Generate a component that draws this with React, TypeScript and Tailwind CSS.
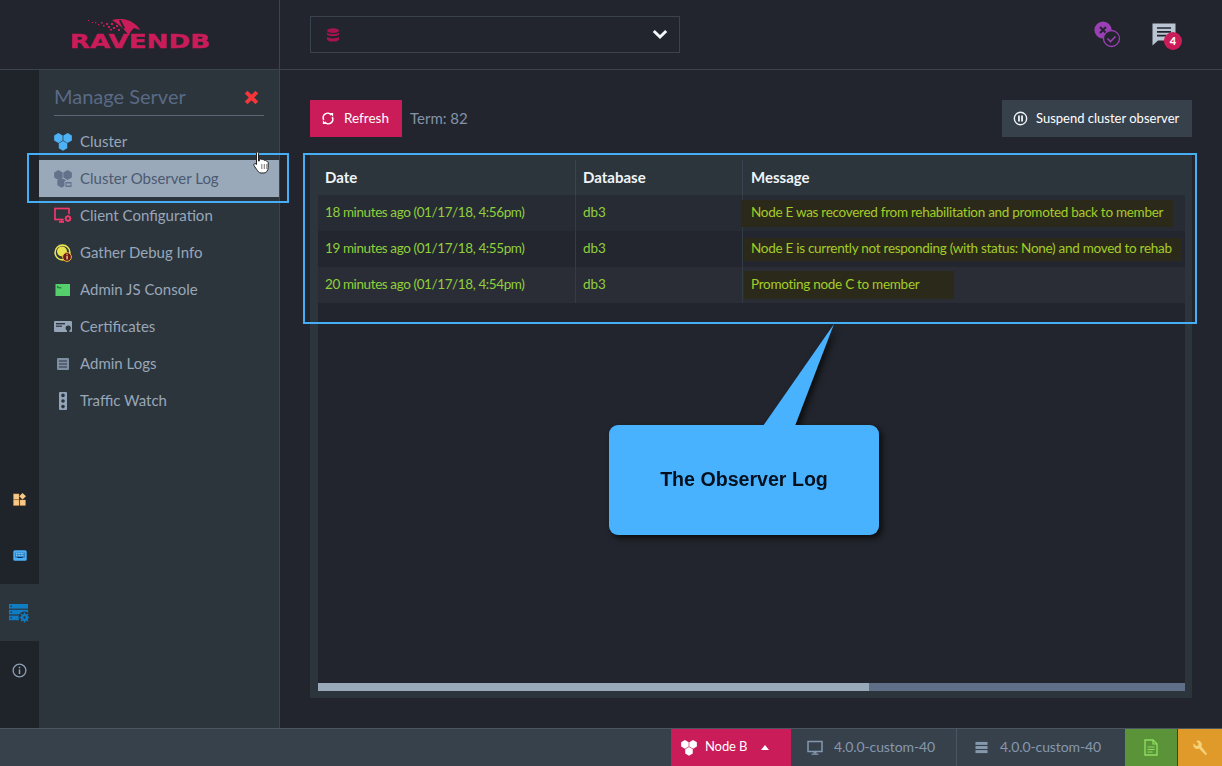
import React from "react";

const hex = (cx: number, cy: number, r: number) => {
  const h = r * 0.866;
  return `${cx},${cy - r} ${cx + h},${cy - r / 2} ${cx + h},${cy + r / 2} ${cx},${cy + r} ${cx - h},${cy + r / 2} ${cx - h},${cy - r / 2}`;
};

const Cluster = ({ c, c2, className }: { c: string; c2?: string; className?: string }) => (
  <svg viewBox="0 0 18 18" className={className}>
    <polygon points={hex(4.4, 5, 4.9)} fill={c} />
    <polygon points={hex(13.6, 5, 4.9)} fill={c} />
    <polygon points={hex(9, 12.8, 4.9)} fill={c2 ?? c} />
  </svg>
);

const ObserverIcon = () => (
  <svg viewBox="0 0 18 18" className="w-[18px] h-[18px]">
    <polygon points={hex(4.4, 5, 4.9)} fill="#63718a" />
    <polygon points={hex(13.6, 5, 4.9)} fill="#63718a" />
    <polygon points={hex(7.6, 12.8, 4.9)} fill="#63718a" />
    <rect x="10.5" y="11" width="7.5" height="6.5" fill="#9aa9ba" />
    <rect x="11.5" y="12" width="6" height="5" fill="#63718a" />
    <rect x="12.5" y="13.5" width="4" height="2" fill="#9aa9ba" />
  </svg>
);

const ClientIcon = () => (
  <svg viewBox="0 0 18 18" className="w-[18px] h-[18px]">
    <rect x="1" y="1.5" width="14" height="11" fill="none" stroke="#f0386b" strokeWidth="1.7" />
    <rect x="5" y="14" width="5" height="1.8" fill="#f0386b" />
    <rect x="6.6" y="12" width="1.8" height="2.4" fill="#f0386b" />
    <circle cx="14" cy="11.5" r="4.4" fill="#2c343c" />
    <circle cx="14" cy="11.5" r="2.2" fill="none" stroke="#f0386b" strokeWidth="1.8" />
    <path d="M14 8.1v1.2M14 13.7v1.2M10.6 11.5h1.2M16.2 11.5h1.2M11.6 9.1l.8.8M15.6 13.1l.8.8M11.6 13.9l.8-.8M15.6 9.9l.8-.8" stroke="#f0386b" strokeWidth="1.2" />
  </svg>
);

const DebugIcon = () => (
  <svg viewBox="0 0 18 18" className="w-[18px] h-[18px]">
    <circle cx="8.5" cy="8.5" r="7.4" fill="#2c343c" stroke="#e9e24f" strokeWidth="1.6" />
    <circle cx="8" cy="7.5" r="5" fill="#e9e24f" />
    <circle cx="13" cy="13" r="4.4" fill="#6f1a18" stroke="#e9b93f" strokeWidth="1" />
    <rect x="12.4" y="12" width="1.3" height="3.4" fill="#f4d9a0" />
    <rect x="12.4" y="10.2" width="1.3" height="1.1" fill="#f4d9a0" />
  </svg>
);

const ConsoleIcon = () => (
  <svg viewBox="0 0 18 18" className="w-[18px] h-[18px]">
    <rect x="1.5" y="3" width="14.5" height="12" fill="#55cf6c" />
    <path d="M3 5l1.6 1.2L3 7" stroke="#1d4a2a" strokeWidth="0.8" fill="none" />
    <rect x="5" y="6.4" width="2.4" height="0.9" fill="#1d4a2a" />
  </svg>
);

const CertIcon = () => (
  <svg viewBox="0 0 18 18" className="w-[18px] h-[18px]">
    <rect x="0" y="3" width="18" height="11" rx="1" fill="#94a4b8" />
    <rect x="2" y="5" width="9" height="1.4" fill="#2c343c" />
    <rect x="2" y="7.6" width="6" height="1.2" fill="#2c343c" />
    <circle cx="14.2" cy="10" r="2.6" fill="#2c343c" />
    <rect x="13" y="11.5" width="2.4" height="3.5" fill="#2c343c" />
  </svg>
);

const LogsIcon = () => (
  <svg viewBox="0 0 18 18" className="w-[18px] h-[18px]">
    <rect x="3" y="3" width="12" height="12" rx="1" fill="#7e8fa4" />
    <path d="M5 6h8M5 9h8M5 12h8" stroke="#2c343c" strokeWidth="1.2" />
  </svg>
);

const TrafficIcon = () => (
  <svg viewBox="0 0 18 18" className="w-[18px] h-[18px]">
    <rect x="5" y="0" width="8" height="18" rx="1" fill="#94a4b8" />
    <circle cx="9" cy="3.4" r="1.8" fill="#2c343c" />
    <circle cx="9" cy="9" r="1.8" fill="#2c343c" />
    <circle cx="9" cy="14.6" r="1.8" fill="#2c343c" />
  </svg>
);

const Logo = () => (
  <div className="relative w-[140px] h-[34px]">
    <svg viewBox="0 0 80 18" className="absolute left-[17px] top-[1px] w-[80px] h-[18px]">
      <path d="M24 1 C30 -0.5 36 0 39 1 C43 2 48 5 51 9 L52 11 L46 9 C44 11 42 13 41 17 C38 12 32 6 24 1Z" fill="#ca1c59" />
      <path d="M31 1 L33 1 L37 9 L35 10Z" fill="#22252d" />
      <g fill="#ca1c59">
        <rect x="0" y="1" width="1" height="1" />
        <rect x="4" y="3" width="1" height="1" />
        <rect x="7" y="3" width="1.3" height="1.3" />
        <rect x="10" y="5" width="1.3" height="1.3" />
        <rect x="13" y="3" width="1.6" height="1.6" />
        <rect x="15" y="6" width="1.6" height="1.6" />
        <rect x="18" y="4" width="2" height="2" />
        <rect x="20" y="7" width="2" height="2" />
        <rect x="23" y="4" width="2" height="2" />
        <rect x="25" y="8" width="2" height="2" />
        <rect x="22" y="10" width="2" height="1.5" />
        <rect x="28" y="6" width="2" height="2" />
        <rect x="30" y="10" width="2" height="2" />
      </g>
    </svg>
    <span className="absolute left-[-1px] top-[11px] origin-left scale-x-[1.31] font-['DejaVu_Sans',sans-serif] font-bold text-[20px] leading-[24px] text-[#ca1c59] whitespace-nowrap [-webkit-text-stroke:0.5px_#ca1c59]">
      RAVENDB
    </span>
  </div>
);

const menu = [
  { label: "Cluster", icon: <Cluster c="#4db2f5" className="w-[18px] h-[18px]" />, active: false },
  { label: "Cluster Observer Log", icon: <ObserverIcon />, active: true },
  { label: "Client Configuration", icon: <ClientIcon />, active: false },
  { label: "Gather Debug Info", icon: <DebugIcon />, active: false },
  { label: "Admin JS Console", icon: <ConsoleIcon />, active: false },
  { label: "Certificates", icon: <CertIcon />, active: false },
  { label: "Admin Logs", icon: <LogsIcon />, active: false },
  { label: "Traffic Watch", icon: <TrafficIcon />, active: false },
];

const rows = [
  {
    date: "18 minutes ago (01/17/18, 4:56pm)",
    msg: "Node E was recovered from rehabilitation and promoted back to member",
    bg: "bg-[#272b34]",
    hl: "h-[27px] ml-[-2px] w-[432px] pl-[10px]",
  },
  {
    date: "19 minutes ago (01/17/18, 4:55pm)",
    msg: "Node E is currently not responding (with status: None) and moved to rehab",
    bg: "bg-[#23262e]",
    hl: "h-[23px] ml-[1px] w-[438px] pl-[7px]",
  },
  {
    date: "20 minutes ago (01/17/18, 4:54pm)",
    msg: "Promoting node C to member",
    bg: "bg-[#2a2d35]",
    hl: "h-[28px] ml-[1px] w-[210px] pl-[7px]",
  },
];

const RailIcons = [
  <svg key="a" viewBox="0 0 14 14" className="w-[13px] h-[13px] mt-[1px]">
    <rect x="0.5" y="1" width="6" height="6" fill="#f5c98a" stroke="#d9822b" strokeWidth="0.4" />
    <rect x="0.5" y="7.5" width="6" height="6" fill="#f5c98a" stroke="#d9822b" strokeWidth="0.4" />
    <rect x="7.5" y="7.5" width="6" height="6" fill="#f5c98a" stroke="#d9822b" strokeWidth="0.4" />
    <polygon points="10.2,0 14,3.4 10.2,7 6.8,3.4" fill="#f5c98a" />
  </svg>,
  <svg key="b" viewBox="0 0 14 11" className="w-[14px] h-[11px]">
    <rect x="0.3" y="0.3" width="13.4" height="10.4" rx="1.5" fill="#49aef5" />
    <rect x="2" y="2.5" width="10" height="5.5" fill="#1c6aa8" opacity="0.6" />
    <path d="M3 3.6h8M3 5.4h8" stroke="#9fdcff" strokeWidth="0.9" strokeDasharray="1 0.6" />
    <rect x="4.5" y="7" width="5" height="1" fill="#0e2b45" />
  </svg>,
  <svg key="c" viewBox="0 0 20 19" className="w-[20px] h-[19px] mt-[2px] ml-[-1px]">
    <rect x="0" y="0" width="19" height="4.6" fill="#0f7cc4" />
    <rect x="0" y="5.8" width="19" height="4.6" fill="#0f7cc4" />
    <rect x="0" y="11.6" width="10" height="4.6" fill="#0f7cc4" />
    <rect x="1.5" y="1.6" width="1.4" height="1.4" fill="#2c343c" />
    <rect x="1.5" y="7.4" width="1.4" height="1.4" fill="#2c343c" />
    <rect x="1.5" y="13.2" width="1.4" height="1.4" fill="#2c343c" />
    <circle cx="15.5" cy="13.5" r="6" fill="#2c343c" />
    <circle cx="15.5" cy="13.5" r="2.4" fill="none" stroke="#0f7cc4" strokeWidth="2.4" />
    <path d="M15.5 8.6v1.6M15.5 16.8v1.6M10.6 13.5h1.6M18.8 13.5h1.2M12 10l1.1 1.1M17.9 15.9L19 17M12 17l1.1-1.1M17.9 11.1L19 10" stroke="#0f7cc4" strokeWidth="1.5" />
  </svg>,
  <svg key="d" viewBox="0 0 16 16" className="w-[15px] h-[15px] mt-[1px]">
    <circle cx="8" cy="8" r="6.8" fill="none" stroke="#8fa0b4" strokeWidth="1.4" />
    <rect x="7.2" y="6.8" width="1.6" height="5" fill="#8fa0b4" />
    <rect x="7.2" y="4" width="1.6" height="1.6" fill="#8fa0b4" />
  </svg>,
];

export default function App() {
  return (
    <div className="relative w-[1222px] h-[766px] overflow-hidden flex flex-col bg-[#22252d] font-[Lato,sans-serif]">
      {/* Header */}
      <header className="flex h-[70px] shrink-0 border-b border-[#3c4450]">
        <div className="w-[280px] shrink-0 border-r border-[#3c4450] pl-[71px] pt-[18px]">
          <Logo />
        </div>
        <div className="flex-1 flex items-start pl-[30px] pt-[16px]">
          <div className="w-[370px] h-[37px] border border-[#3a424e] flex items-center justify-between pl-[16px] pr-[11px]">
            <svg viewBox="0 0 12 14" className="w-[12px] h-[14px]">
              <ellipse cx="6" cy="2.6" rx="6" ry="2.4" fill="#a8134f" />
              <path d="M0 4.4c1 1.2 3 1.7 6 1.7s5-.5 6-1.7v2c-1 1.2-3 1.7-6 1.7s-5-.5-6-1.7z" fill="#a8134f" />
              <path d="M0 8.8c1 1.2 3 1.7 6 1.7s5-.5 6-1.7v2.6c-1 1.6-3 2.2-6 2.2s-5-.6-6-2.2z" fill="#a8134f" />
            </svg>
            <svg viewBox="0 0 16 11" className="w-[16px] h-[11px]">
              <path d="M1.8 2 L8 8 L14.2 2" fill="none" stroke="#f4f8fc" strokeWidth="3" />
            </svg>
          </div>
          <div className="ml-auto flex items-start">
            <svg viewBox="0 0 28 28" className="w-[28px] h-[28px] mt-[4px] mr-[31px]">
              <circle cx="10" cy="10" r="8.6" fill="#9a3fb5" />
              <path d="M7 7l6 6M13 7l-6 6" stroke="#22252d" strokeWidth="2" />
              <circle cx="18.5" cy="18.5" r="8" fill="#22252d" stroke="#9a3fb5" strokeWidth="1.3" />
              <path d="M14.5 18.5l3 3 5-5" fill="none" stroke="#9a3fb5" strokeWidth="1.6" />
            </svg>
            <div className="relative w-[31px] h-[32px] mt-[7px] mr-[39px]">
              <svg viewBox="0 0 24 24" className="w-[24px] h-[24px]">
                <path d="M0.5 0.5 H23.5 V17.5 H6 L0.5 22.5Z" fill="#b9c5d3" />
                <path d="M5 5h14M5 8.8h14M5 12.6h9" stroke="#22252d" strokeWidth="1.7" />
              </svg>
              <span className="absolute left-[12px] top-[9px] w-[18px] h-[18px] rounded-full bg-[#ca1c59] text-white text-[11px] font-black leading-[18px] text-center">
                4
              </span>
            </div>
          </div>
        </div>
      </header>

      {/* Middle */}
      <div className="flex flex-1 min-h-0">
        <nav className="w-[39px] shrink-0 bg-[#1f232a] flex flex-col justify-end pb-[30px]">
          {RailIcons.map((ic, i) => (
            <div key={i} className={`h-[57px] flex items-center justify-center ${i === 2 ? "bg-[#2c343c]" : ""}`}>
              {ic}
            </div>
          ))}
        </nav>

        <aside className="w-[241px] shrink-0 bg-[#2c343c] border-r border-[#3c4450] pt-[13px]">
          <div className="mx-[15px] h-[33px] border-b border-[#5b6775] flex items-start justify-between pr-[5px]">
            <span className="text-[20px] leading-[26px] text-[#5a6a84]">Manage Server</span>
            <svg viewBox="0 0 14 14" className="w-[15px] h-[15px] mt-[7px]">
              <path d="M2 2l10 10M12 2L2 12" stroke="#f4363a" strokeWidth="3.6" />
            </svg>
          </div>
          <ul className="mt-[7px]">
            {menu.map((m) => (
              <li
                key={m.label}
                className={`h-[37px] flex items-center pl-[15px] gap-[8px] text-[15px] ${
                  m.active ? "bg-[#9aa9ba] text-[#4b5a70]" : "text-[#98a7b9]"
                }`}
              >
                <span className="w-[18px] h-[18px] shrink-0 flex items-center">{m.icon}</span>
                {m.label}
              </li>
            ))}
          </ul>
        </aside>

        <main className="flex-1 min-w-0 pl-[30px] pr-[30px] pt-[30px]">
          <div className="flex items-center h-[37px]">
            <button className="w-[92px] h-[37px] bg-[#ca1c59] text-white text-[13.5px] flex items-center pl-[12px] gap-[10px]">
              <svg viewBox="0 0 14 14" className="w-[12px] h-[13px]">
                <path d="M2 8.5A5.2 5.2 0 0 1 10.8 3" fill="none" stroke="#fff" strokeWidth="1.9" />
                <path d="M12 5.5A5.2 5.2 0 0 1 3.2 11" fill="none" stroke="#fff" strokeWidth="1.9" />
                <polygon points="9,0.5 13,0.5 13,5" fill="#fff" />
                <polygon points="1,9 5,13.5 1,13.5" fill="#fff" />
              </svg>
              Refresh
            </button>
            <span className="ml-[8px] text-[15px] text-[#8393a8]">Term: 82</span>
            <button className="ml-auto w-[190px] h-[37px] bg-[#37414c] text-white text-[13px] flex items-center pl-[11px] gap-[8px]">
              <svg viewBox="0 0 16 16" className="w-[15px] h-[15px]">
                <circle cx="8" cy="8" r="6.6" fill="none" stroke="#f0f4f8" strokeWidth="1.5" />
                <rect x="5.4" y="4.8" width="1.9" height="6.4" fill="#f0f4f8" />
                <rect x="8.7" y="4.8" width="1.9" height="6.4" fill="#f0f4f8" />
              </svg>
              Suspend cluster observer
            </button>
          </div>

          <div className="mt-[18px] h-[543px] bg-[#2c343c] pl-[8px] pr-[7px] pb-[7px] flex flex-col">
            <div className="grid grid-cols-[257px_167px_1fr] h-[40px] pt-[5px] shrink-0 text-[15px] font-bold text-[#f0f4f8]">
              <div className="pl-[7px] flex items-center">Date</div>
              <div className="pl-[7px] flex items-center border-l border-[#3a4450]">Database</div>
              <div className="pl-[8px] flex items-center border-l border-[#3a4450]">Message</div>
            </div>
            <div className="flex-1 min-h-0 bg-[#22252d] flex flex-col">
              {rows.map((r) => (
                <div key={r.date} className={`grid grid-cols-[257px_167px_1fr] h-[36px] text-[13.5px] ${r.bg}`}>
                  <div className="pl-[7px] pb-[2px] flex items-center text-[#8fd03c] tracking-[-0.4px]">{r.date}</div>
                  <div className="pl-[7px] pb-[2px] flex items-center text-[#8fd03c] border-l border-[#333b46]">db3</div>
                  <div className="flex items-center text-[#a4cc28] tracking-[-0.28px] border-l border-[#333b46]">
                    <span className={`flex items-center bg-[#2b2a1a] whitespace-nowrap pb-[1px] ${r.hl}`}>{r.msg}</span>
                  </div>
                </div>
              ))}
            </div>
            <div className="h-[8px] shrink-0 bg-[#5f6f88]">
              <div className="h-full w-[551px] bg-[#9aa9ba]" />
            </div>
          </div>
        </main>
      </div>

      {/* Footer */}
      <footer className="h-[38px] shrink-0 flex bg-[#37414c] border-t border-[#4b5662] text-[14px] tracking-[-0.1px] text-[#8698ad]">
        <div className="ml-[671px] w-[120px] bg-[#ca1c59] text-white flex items-center pl-[10px] gap-[8px]">
          <Cluster c="#fff" className="w-[16px] h-[16px]" />
          <span className="text-[13px] pb-[2px]">Node B</span>
          <svg viewBox="0 0 8 5" className="ml-[6px] w-[8px] h-[5px]">
            <polygon points="4,0 8,5 0,5" fill="#fff" />
          </svg>
        </div>
        <div className="w-[166px] flex items-center pl-[16px] gap-[11px] border-r border-[#4b5662]">
          <svg viewBox="0 0 16 16" className="w-[16px] h-[16px]">
            <rect x="1" y="1.5" width="14" height="10" fill="none" stroke="#8698ad" strokeWidth="1.5" />
            <rect x="6.5" y="12" width="3" height="1.6" fill="#8698ad" />
            <rect x="4.5" y="13.6" width="7" height="1.2" fill="#8698ad" />
          </svg>
          <span className="pb-[3px]">4.0.0-custom-40</span>
        </div>
        <div className="w-[168px] flex items-center pl-[18px] gap-[12px]">
          <svg viewBox="0 0 14 14" className="w-[13px] h-[13px]">
            <rect x="0.5" y="1" width="13" height="3.2" fill="#8698ad" />
            <rect x="0.5" y="5.4" width="13" height="3.2" fill="#8698ad" />
            <rect x="0.5" y="9.8" width="13" height="3.2" fill="#8698ad" />
          </svg>
          <span className="pb-[3px]">4.0.0-custom-40</span>
        </div>
        <div className="w-[52px] bg-[#5b9338] flex items-center justify-center">
          <svg viewBox="0 0 14 17" className="w-[14px] h-[17px]">
            <path d="M1 1h8l4 4v11H1z" fill="none" stroke="#8fe060" strokeWidth="1.3" />
            <path d="M9 1v4h4" fill="none" stroke="#8fe060" strokeWidth="1.2" />
            <path d="M3.5 8h7M3.5 10.5h7M3.5 13h5" stroke="#8fe060" strokeWidth="1.2" />
          </svg>
        </div>
        <div className="ml-[1px] w-[44px] bg-[#e09a2a] flex items-center justify-center">
          <svg viewBox="0 0 16 16" className="w-[16px] h-[16px]">
            <path d="M15 14l-1.2 1.2L7 8.6a4 4 0 0 1-5.4-5L4 6l2.2-.4L6.6 3.4 4.2 1A4 4 0 0 1 9.4 6.4z" fill="#f6d27a" />
          </svg>
        </div>
      </footer>

      {/* Annotation overlays */}
      <div className="absolute left-[27px] top-[153px] w-[262px] h-[50px] border-2 border-[#45aef5] pointer-events-none" />
      <div className="absolute left-[303px] top-[153px] w-[894px] h-[171px] border-2 border-[#45aef5] pointer-events-none" />

      <svg viewBox="0 0 18 24" className="absolute left-[253px] top-[151px] w-[18px] h-[24px]">
        <path
          d="M3.5 1.5c.8-.8 2-.3 2 .8V10l1-.2V8.5c1-.8 2-.5 2.4.3 1-.6 2-.3 2.4.6 1-.4 2 0 2.3.9.8 0 1.6.6 1.6 1.6v4.6c0 2.6-1.6 5.5-4.2 5.5H8c-2 0-3-1.6-4.4-3.6L1 14.6c-.8-1.4.8-2.6 2-1.6l.5.5z"
          fill="#fff"
          stroke="#222"
          strokeWidth="1"
        />
        <path d="M8.8 13v5M11.3 13v5M13.8 13v5" stroke="#555" strokeWidth="0.8" />
      </svg>

      <div className="absolute left-[609px] top-[324px] w-[270px] h-[211px] drop-shadow-[3px_3px_3px_rgba(0,0,0,0.7)]">
        <svg viewBox="0 0 270 102" className="absolute left-0 top-0 w-[270px] h-[102px]">
          <polygon points="225,0 154,102 186,102" fill="#48b2ff" />
        </svg>
        <div className="absolute left-0 top-[101px] w-[270px] h-[110px] rounded-[9px] bg-[#48b2ff] flex items-center justify-center font-['Liberation_Sans',sans-serif] font-bold text-[19.6px] text-[#02101e]">
          The Observer Log
        </div>
      </div>
    </div>
  );
}
